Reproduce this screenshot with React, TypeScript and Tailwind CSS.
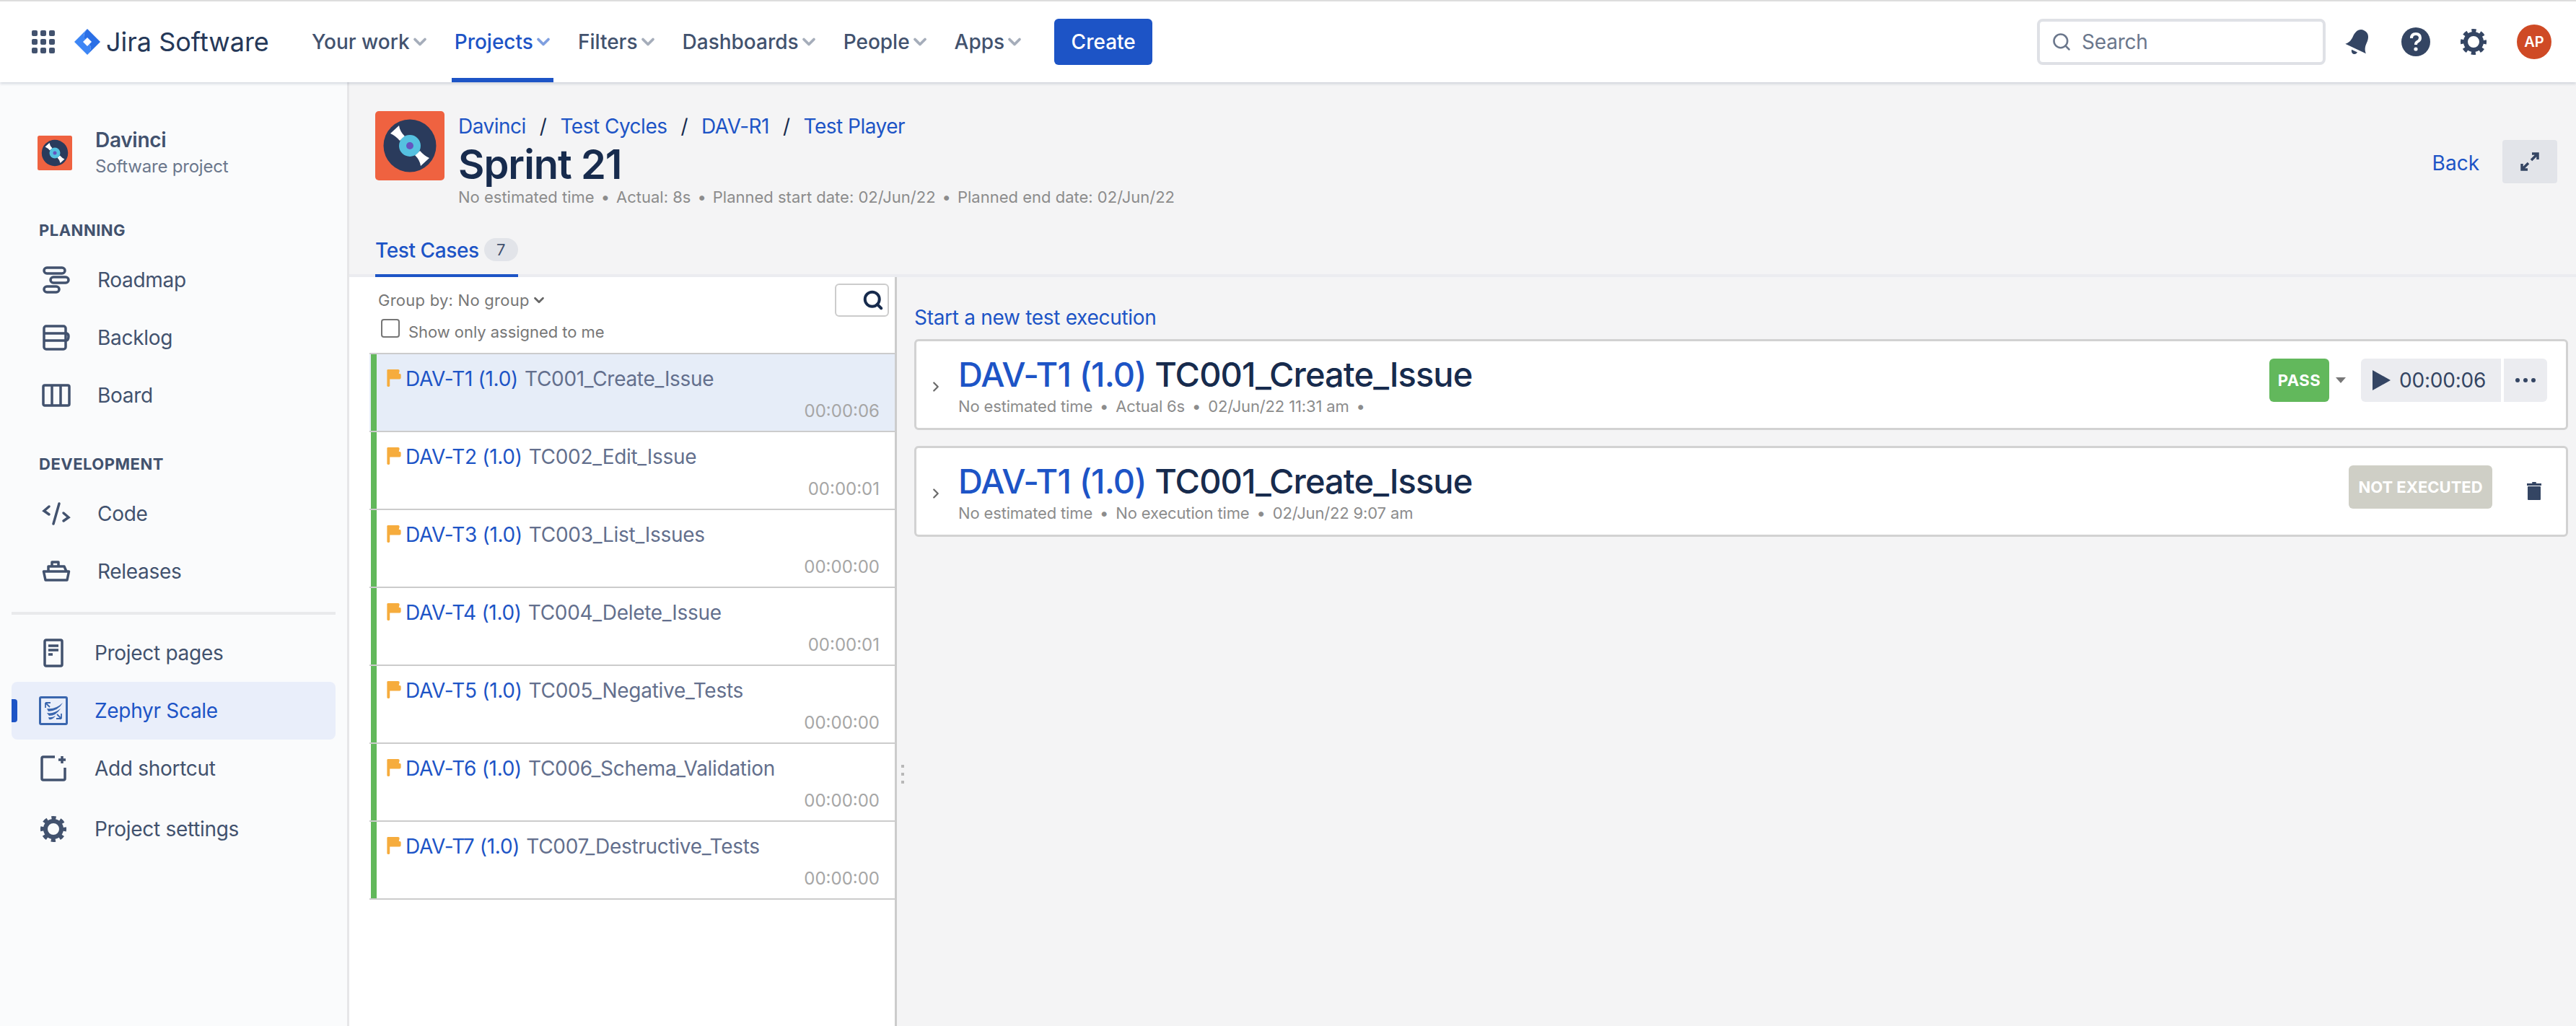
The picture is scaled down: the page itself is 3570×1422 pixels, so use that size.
import { ChevronDown, ChevronRight, Search } from "lucide-react";

const NAV_ITEMS = ["Your work", "Projects", "Filters", "Dashboards", "People", "Apps"];

const TEST_CASES = [
  { key: "DAV-T1 (1.0)", name: "TC001_Create_Issue", time: "00:00:06", active: true },
  { key: "DAV-T2 (1.0)", name: "TC002_Edit_Issue", time: "00:00:01" },
  { key: "DAV-T3 (1.0)", name: "TC003_List_Issues", time: "00:00:00" },
  { key: "DAV-T4 (1.0)", name: "TC004_Delete_Issue", time: "00:00:01" },
  { key: "DAV-T5 (1.0)", name: "TC005_Negative_Tests", time: "00:00:00" },
  { key: "DAV-T6 (1.0)", name: "TC006_Schema_Validation", time: "00:00:00" },
  { key: "DAV-T7 (1.0)", name: "TC007_Destructive_Tests", time: "00:00:00" },
];

function GearIcon({ className }: { className: string }) {
  return (
    <svg viewBox="0 0 36 36" className={className} fill="none" stroke="currentColor">
      <circle cx="18" cy="18" r="11" strokeWidth="6" />
      <circle cx="18" cy="18" r="15" strokeWidth="6" strokeDasharray="6 5.78" strokeDashoffset="3" />
    </svg>
  );
}

function DiscIcon({ className }: { className: string }) {
  return (
    <svg viewBox="0 0 96 96" className={className}>
      <rect width="96" height="96" rx="5" fill="#ef6240" />
      <circle cx="48" cy="48" r="36.5" fill="#2a3b5c" />
      <path d="M33 20 Q34 28 41 35 L34 41 Q28 34 21 31 Z" fill="#fff" />
      <path d="M63 76 Q62 68 55 61 L62 55 Q68 62 75 65 Z" fill="#fff" />
      <circle cx="48" cy="48" r="15" fill="#55c1e0" />
      <circle cx="48" cy="48" r="5" fill="#6554c0" />
    </svg>
  );
}

function RoadmapIcon() {
  return (
    <svg viewBox="0 0 40 40" className="w-10 h-10" fill="none" stroke="currentColor" strokeWidth="3.5">
      <rect x="3" y="3" width="29" height="8" rx="4" />
      <rect x="12" y="16" width="25" height="8" rx="4" />
      <rect x="3" y="29" width="21" height="8" rx="4" />
    </svg>
  );
}

function BacklogIcon() {
  return (
    <svg viewBox="0 0 40 40" className="w-10 h-10" fill="none" stroke="currentColor" strokeWidth="3.5">
      <rect x="3" y="4" width="30" height="32" rx="3" />
      <path d="M3 14 H33 Q37 14 37 18 Q37 24 33 24 H3" />
    </svg>
  );
}

function BoardIcon() {
  return (
    <svg viewBox="0 0 40 40" className="w-10 h-10" fill="none" stroke="currentColor" strokeWidth="3.5">
      <rect x="2" y="6" width="36" height="28" rx="2" />
      <path d="M14 6 V34 M26 6 V34" />
    </svg>
  );
}

function CodeIcon() {
  return (
    <svg viewBox="0 0 40 40" className="w-10 h-10" fill="none" stroke="currentColor" strokeWidth="3.5" strokeLinecap="round">
      <path d="M10 10 L3 16 L10 21 M30 19 L37 25 L30 30 M24 6 L16 34" />
    </svg>
  );
}

function ReleasesIcon() {
  return (
    <svg viewBox="0 0 40 40" className="w-10 h-10" fill="none" stroke="currentColor" strokeWidth="3.5" strokeLinejoin="round">
      <path d="M2.5 20 H37.5 L35 32 H5 Z" />
      <path d="M9 20 V13 H31 L34 20 M14 13 V7 H23 V13" />
    </svg>
  );
}

function PagesIcon() {
  return (
    <svg viewBox="0 0 28 40" className="w-7 h-10" fill="none" stroke="currentColor" strokeWidth="3.5">
      <rect x="2" y="2" width="24" height="36" rx="2" />
      <path d="M7 10 H21 M7 16 H21 M7 22 H13" />
    </svg>
  );
}

function ZephyrIcon() {
  return (
    <svg viewBox="0 0 40 40" className="w-10 h-10" fill="none" stroke="#3a66ae" strokeWidth="2">
      <rect x="1.5" y="1.5" width="37" height="37" rx="1.5" strokeWidth="3" />
      <path d="M9 9 L15 15 M9 9 H16 M9 9 V16 M31 31 L25 25 M31 31 H24 M31 31 V24" strokeWidth="1.8" />
      <path d="M11 17 Q22 19 33 9 Q27 20 13 21 Z M11 23 Q20 25 30 17 Q24 27 14 27 Z M13 29 Q18 30 23 27 Q19 33 14 32 Z" fill="#3a66ae" stroke="none" />
    </svg>
  );
}

function ShortcutIcon() {
  return (
    <svg viewBox="0 0 36 36" className="w-9 h-9" fill="none" stroke="currentColor" strokeWidth="3.5">
      <path d="M20 2 H4 Q2 2 2 4 V32 Q2 34 4 34 H32 Q34 34 34 32 V17" />
      <path d="M30 1 V11 M25 6 H35" />
    </svg>
  );
}

function SideItem({
  label,
  icon,
  active,
  iconBox = "w-[77px] pl-[42px]",
  rowHeight = "h-[80px]",
}: {
  label: string;
  icon: React.ReactNode;
  active?: boolean;
  iconBox?: string;
  rowHeight?: string;
}) {
  return (
    <div
      className={`relative mx-4 flex items-center rounded-lg text-[28px] tracking-[-0.3px] ${rowHeight} ${
        active ? "bg-[#e9eefa] text-[#1d54c6]" : "text-[#42526e]"
      }`}
    >
      {active && <div className="absolute left-0 top-6 w-2 h-8 rounded-r bg-[#1d54c6]" />}
      <div className={`shrink-0 flex items-center ${iconBox}`}>{icon}</div>
      <span>{label}</span>
    </div>
  );
}

function Sidebar() {
  return (
    <aside className="w-[484px] shrink-0 bg-[#fafbfc] border-r-[3px] border-[#e6e6e8] text-[#42526e]">
      <div className="flex items-center pl-[52px] pt-[61px]">
        <DiscIcon className="w-12 h-12" />
        <div className="ml-8">
          <div className="text-[28px] leading-[38px] font-semibold tracking-[-0.3px]">Davinci</div>
          <div className="text-2xl leading-[36px] text-[#6b778c] tracking-[-0.2px]">Software project</div>
        </div>
      </div>
      <div className="pl-[54px] mt-[56px] text-[22px] leading-[28px] font-bold tracking-[0.5px]">PLANNING</div>
      <div className="mt-[15px]">
        <SideItem label="Roadmap" icon={<RoadmapIcon />} iconBox="w-[119px] pl-[42px]" />
        <SideItem label="Backlog" icon={<BacklogIcon />} iconBox="w-[119px] pl-[42px]" />
        <SideItem label="Board" icon={<BoardIcon />} iconBox="w-[119px] pl-[42px]" />
      </div>
      <div className="pl-[54px] mt-[41px] text-[22px] leading-[28px] font-bold tracking-[0.5px]">DEVELOPMENT</div>
      <div className="mt-[15px]">
        <SideItem label="Code" icon={<CodeIcon />} iconBox="w-[119px] pl-[42px]" />
        <SideItem label="Releases" icon={<ReleasesIcon />} iconBox="w-[119px] pl-[42px]" />
      </div>
      <div className="mx-4 mt-[16px] h-1 bg-[#e9eaec]" />
      <div className="mt-[13px]">
        <SideItem label="Project pages" icon={<PagesIcon />} iconBox="w-[115px] pl-[44px]" />
        <SideItem label="Zephyr Scale" icon={<ZephyrIcon />} iconBox="w-[115px] pl-[38px]" active />
        <SideItem label="Add shortcut" icon={<ShortcutIcon />} iconBox="w-[115px] pl-[40px]" />
        <SideItem
          label="Project settings"
          icon={<GearIcon className="w-9 h-9" />}
          iconBox="w-[115px] pl-[40px]"
          rowHeight="h-[88px]"
        />
      </div>
    </aside>
  );
}

function TopNav() {
  return (
    <header className="relative z-10 h-[114px] shrink-0 flex items-center border-t-2 border-[#dddddd] bg-white shadow-[0_2px_4px_rgba(9,30,66,0.16)] text-[#42526e]">
      <svg viewBox="0 0 32 32" className="ml-[44px] w-8 h-8" fill="currentColor">
        {[0, 12, 24].map((y) =>
          [0, 12, 24].map((x) => <rect key={`${x}-${y}`} x={x} y={y} width="8" height="8" rx="2" />),
        )}
      </svg>
      <svg viewBox="0 0 36 36" className="ml-[27px] w-[36px] h-[36px]">
        <path d="M18 0 L36 18 L18 36 Q23 30 23 25 L18 18 L13 13 Q13 5 18 0 Z" fill="#2a6fe6" />
        <path d="M18 0 Q13 6 13 11 L18 18 L23 25 Q23 31 18 36 L0 18 Z" fill="#3d86f5" />
        <path d="M18 12 L24 18 L18 24 L12 18 Z" fill="#fff" />
      </svg>
      <span className="ml-2 w-[224px] whitespace-nowrap text-[36px] text-[#253858]">Jira Software</span>
      <nav className="ml-[57px] flex h-full items-stretch gap-[30px]">
        {NAV_ITEMS.map((item) => {
          const active = item === "Projects";
          return (
            <div
              key={item}
              className={`flex items-center px-1 border-b-[6px] pt-[6px] text-[28px] font-medium whitespace-nowrap ${
                active ? "border-[#1d54c6] text-[#1d54c6]" : "border-transparent text-[#42526e]"
              }`}
            >
              {item}
              <ChevronDown
                size={28}
                strokeWidth={3.2}
                className={`-mr-1 ${active ? "text-[#7f9fe0]" : "text-[#a5adba]"}`}
              />
            </div>
          );
        })}
      </nav>
      <button className="ml-[41px] h-16 w-[136px] rounded-md bg-[#1d54c6] text-[28px] font-medium text-white">
        Create
      </button>
      <div className="ml-auto flex w-[400px] h-16 items-center rounded-lg border-4 border-[#dfe1e6] pl-4 text-[#6b778c]">
        <Search size={28} strokeWidth={2.2} />
        <span className="ml-[14px] text-[28px] tracking-[-0.2px]">Search</span>
      </div>
      <svg viewBox="0 0 24 24" className="ml-[25px] w-[42px] h-[42px] text-[#344563]" fill="currentColor">
        <g transform="rotate(25 12 12)">
          <path d="M12 2 C7.5 2 6 6 6 10 C6 14 5 16 3 18 H21 C19 16 18 14 18 10 C18 6 16.5 2 12 2 Z" />
          <path d="M9.5 20 H14.5 Q14 22.5 12 22.5 Q10 22.5 9.5 20 Z" />
        </g>
      </svg>
      <svg viewBox="0 0 40 40" className="ml-[38px] w-10 h-10">
        <circle cx="20" cy="20" r="20" fill="#344563" />
        <path d="M14 15 Q14 9 20 9 Q26 9 26 14.5 Q26 18 22 20 Q20 21 20 24" fill="none" stroke="#fff" strokeWidth="4" />
        <circle cx="20" cy="30" r="2.6" fill="#fff" />
      </svg>
      <GearIcon className="ml-[42px] w-9 h-9 text-[#344563]" />
      <div className="ml-[42px] mr-[34px] flex h-12 w-12 items-center justify-center rounded-full bg-[#cf4a25] text-[20px] font-semibold text-white">
        AP
      </div>
    </header>
  );
}

function PageHeader() {
  return (
    <div className="h-[270px] shrink-0 border-b-4 border-[#ebecf0] bg-[#f4f4f5] relative">
      <div className="flex pl-[36px] pr-[26px] pt-[40px]">
        <DiscIcon className="w-24 h-24 shrink-0" />
        <div className="ml-[19px]">
          <div className="flex h-[42px] items-center gap-[19px] text-[28px] tracking-[-0.5px] text-[#1d54c6] whitespace-nowrap">
            <span>Davinci</span>
            <span className="text-[#172b4d]">/</span>
            <span>Test Cycles</span>
            <span className="text-[#172b4d]">/</span>
            <span>DAV-R1</span>
            <span className="text-[#172b4d]">/</span>
            <span>Test Player</span>
          </div>
          <div className="text-[56px] leading-[64px] font-semibold tracking-[-1px] text-[#172b4d]">Sprint 21</div>
          <div className="-mt-[1px] flex gap-[9px] text-[22px] leading-[28px] text-[#8c8c8c]">
            <span>No estimated time</span>
            <span>•</span>
            <span>Actual: 8s</span>
            <span>•</span>
            <span>Planned start date: 02/Jun/22</span>
            <span>•</span>
            <span>Planned end date: 02/Jun/22</span>
          </div>
        </div>
        <div className="ml-auto mt-10 flex h-[60px] items-center gap-8">
          <span className="mt-[3px] text-[28px] text-[#1d54c6]">Back</span>
          <div className="flex h-[60px] w-[76px] items-center justify-center rounded bg-[#e2e4e9]">
            <svg viewBox="0 0 28 28" className="w-7 h-7" fill="none" stroke="#344563" strokeWidth="3.5">
              <path d="M16 12 L25 3 M17 3 H25 V11 M12 16 L3 25 M11 25 H3 V17" />
            </svg>
          </div>
        </div>
      </div>
      <div className="absolute left-[36px] -bottom-1 flex h-[54px] w-[198px] items-start border-b-4 border-[#1d54c6]">
        <span className="whitespace-nowrap text-[28px] leading-[34px] font-medium tracking-[-0.4px] text-[#1d54c6]">Test Cases</span>
        <span className="ml-[7px] flex h-8 w-12 items-center justify-center rounded-full bg-[#e2e4e9] text-[22px] text-[#42526e]">7</span>
      </div>
    </div>
  );
}

function TestCaseList() {
  return (
    <section className="w-[759px] shrink-0 border-r-[3px] border-[#cccccc] bg-white pl-[28px] flex flex-col">
      <div className="h-[105px] shrink-0 relative pl-3 text-[22px] text-[#777777]">
        <div className="flex items-center pt-[17px] leading-[30px] whitespace-nowrap">
          <span className="tracking-[0.25px]">Group by: No group</span>
          <ChevronDown size={22} strokeWidth={3} className="ml-[2px] text-[#666666]" />
        </div>
        <div className="flex items-start mt-[12px] pl-1">
          <div className="-mt-[1px] w-[26px] h-[26px] rounded border-2 border-[#767676] bg-white" />
          <span className="ml-3 mt-[2px] leading-[30px] tracking-[-0.05px]">Show only assigned to me</span>
        </div>
        <div className="absolute right-2 top-[9px] flex h-[46px] w-[75px] items-center justify-end rounded-md border-2 border-[#cccccc] pr-[5px] text-[#172b4d]">
          <Search size={30} strokeWidth={3.2} />
        </div>
      </div>
      <div className="border-t-2 border-[#cccccc]">
        {TEST_CASES.map((tc) => (
          <div
            key={tc.key}
            className={`flex h-[108px] border-b-2 border-[#cccccc] ${tc.active ? "bg-[#e6edf8]" : "bg-white"}`}
          >
            <div className="ml-[2px] w-2 bg-[#62b85b] shrink-0" />
            <div className="flex-1 pl-[14px] pr-[21px]">
              <div className="flex items-center pt-[16px] text-[28px] leading-[36px] tracking-[-0.3px]">
                <svg viewBox="0 0 20 26" className="w-5 h-[25px] shrink-0 -mt-[2px]" fill="#f6ac3d">
                  <rect x="0" y="0" width="4" height="25" rx="1.5" />
                  <path d="M2 0 H16 Q18 0 18 2 L17 6 Q20 6 20 8 V12 Q20 14 18 14 H2 Z" />
                </svg>
                <span className="ml-[6px] text-[#1d54c6]">{tc.key}</span>
                <span className="ml-[9px] text-[#636f8d]">{tc.name}</span>
              </div>
              <div className="mt-[12px] text-right text-2xl leading-[30px] text-[#a6a6a6]">{tc.time}</div>
            </div>
          </div>
        ))}
      </div>
    </section>
  );
}

function ExecutionCard({
  meta,
  actions,
}: {
  meta: string[];
  actions: React.ReactNode;
}) {
  return (
    <div className="flex h-[126px] items-start rounded-md border-[3px] border-[#d2d2d2] bg-white pr-[26px]">
      <ChevronRight size={22} strokeWidth={2.5} className="ml-[16px] mt-[52px] shrink-0 text-[#6b6b6b]" />
      <div className="ml-[20px] pt-[18px]">
        <div className="text-[47px] leading-[56px] font-medium tracking-[-0.9px] text-[#172b4d] whitespace-nowrap">
          <span className="text-[#1d54c6]">DAV-T1 (1.0)</span> TC001_Create_Issue
        </div>
        <div className="mt-[2px] flex gap-[10px] text-[22px] leading-[28px] tracking-[-0.15px] text-[#8c8c8c]">
          {meta.map((m, i) => (
            <span key={i}>{m}</span>
          ))}
        </div>
      </div>
      <div className="ml-auto flex items-start">{actions}</div>
    </div>
  );
}

export default function App() {
  return (
    <div className="flex h-[1422px] w-[3570px] flex-col overflow-hidden bg-white font-['Inter',sans-serif]">
      <TopNav />
      <div className="flex flex-1 min-h-0">
        <Sidebar />
        <main className="flex flex-1 flex-col min-w-0 bg-[#f4f4f5]">
          <PageHeader />
          <div className="flex flex-1 min-h-0">
            <TestCaseList />
            <div className="relative flex-1 pl-[24px] pr-[11px] pt-[38px]">
              <div className="absolute left-[6px] top-[676px] flex flex-col gap-[7px]">
                {[0, 1, 2].map((d) => (
                  <div key={d} className="w-[4px] h-[4px] bg-[#b8b8b8]" />
                ))}
              </div>
              <div className="text-[28px] leading-[36px] tracking-[-0.3px] text-[#1d54c6]">Start a new test execution</div>
              <div className="mt-[12px] flex flex-col gap-[22px]">
                <ExecutionCard
                  meta={["No estimated time", "•", "Actual 6s", "•", "02/Jun/22 11:31 am", "•"]}
                  actions={
                    <div className="mt-[24px] flex items-center">
                      <div className="flex h-[60px] w-[83px] items-center justify-center rounded-md bg-[#62b85c] text-[22px] font-bold tracking-[0.6px] text-white">
                        PASS
                      </div>
                      <div className="ml-[9px] h-0 w-0 border-x-[7px] border-t-[8px] border-x-transparent border-t-[#777777]" />
                      <div className="ml-[21px] flex h-[60px] w-[194px] items-center rounded-l-md bg-[#ebecf0] pl-4 text-[28px] tracking-[-0.2px] text-[#344563]">
                        <div className="h-0 w-0 border-y-[14px] border-l-[25px] border-y-transparent border-l-[#344563]" />
                        <span className="ml-3">00:00:06</span>
                      </div>
                      <div className="ml-1 flex h-[60px] w-[60px] items-center justify-center gap-[5px] rounded-r-md bg-[#ebecf0]">
                        {[0, 1, 2].map((d) => (
                          <div key={d} className="h-[6px] w-[6px] rounded-full bg-[#344563]" />
                        ))}
                      </div>
                    </div>
                  }
                />
                <ExecutionCard
                  meta={["No estimated time", "•", "No execution time", "•", "02/Jun/22 9:07 am"]}
                  actions={
                    <div className="mt-[24px] mr-[8px] flex items-start">
                      <div className="flex h-[60px] w-[199px] items-center justify-center rounded-md bg-[#cfcfc6] text-[22px] font-bold text-white">
                        NOT EXECUTED
                      </div>
                      <svg viewBox="0 0 20 25" className="ml-[48px] mt-[23px] w-5 h-[25px]" fill="#344563">
                        <rect x="0" y="2" width="20" height="3" />
                        <rect x="7" y="0" width="6" height="2" rx="1" />
                        <rect x="1" y="6" width="18" height="19" rx="1" />
                      </svg>
                    </div>
                  }
                />
              </div>
            </div>
          </div>
        </main>
      </div>
    </div>
  );
}
